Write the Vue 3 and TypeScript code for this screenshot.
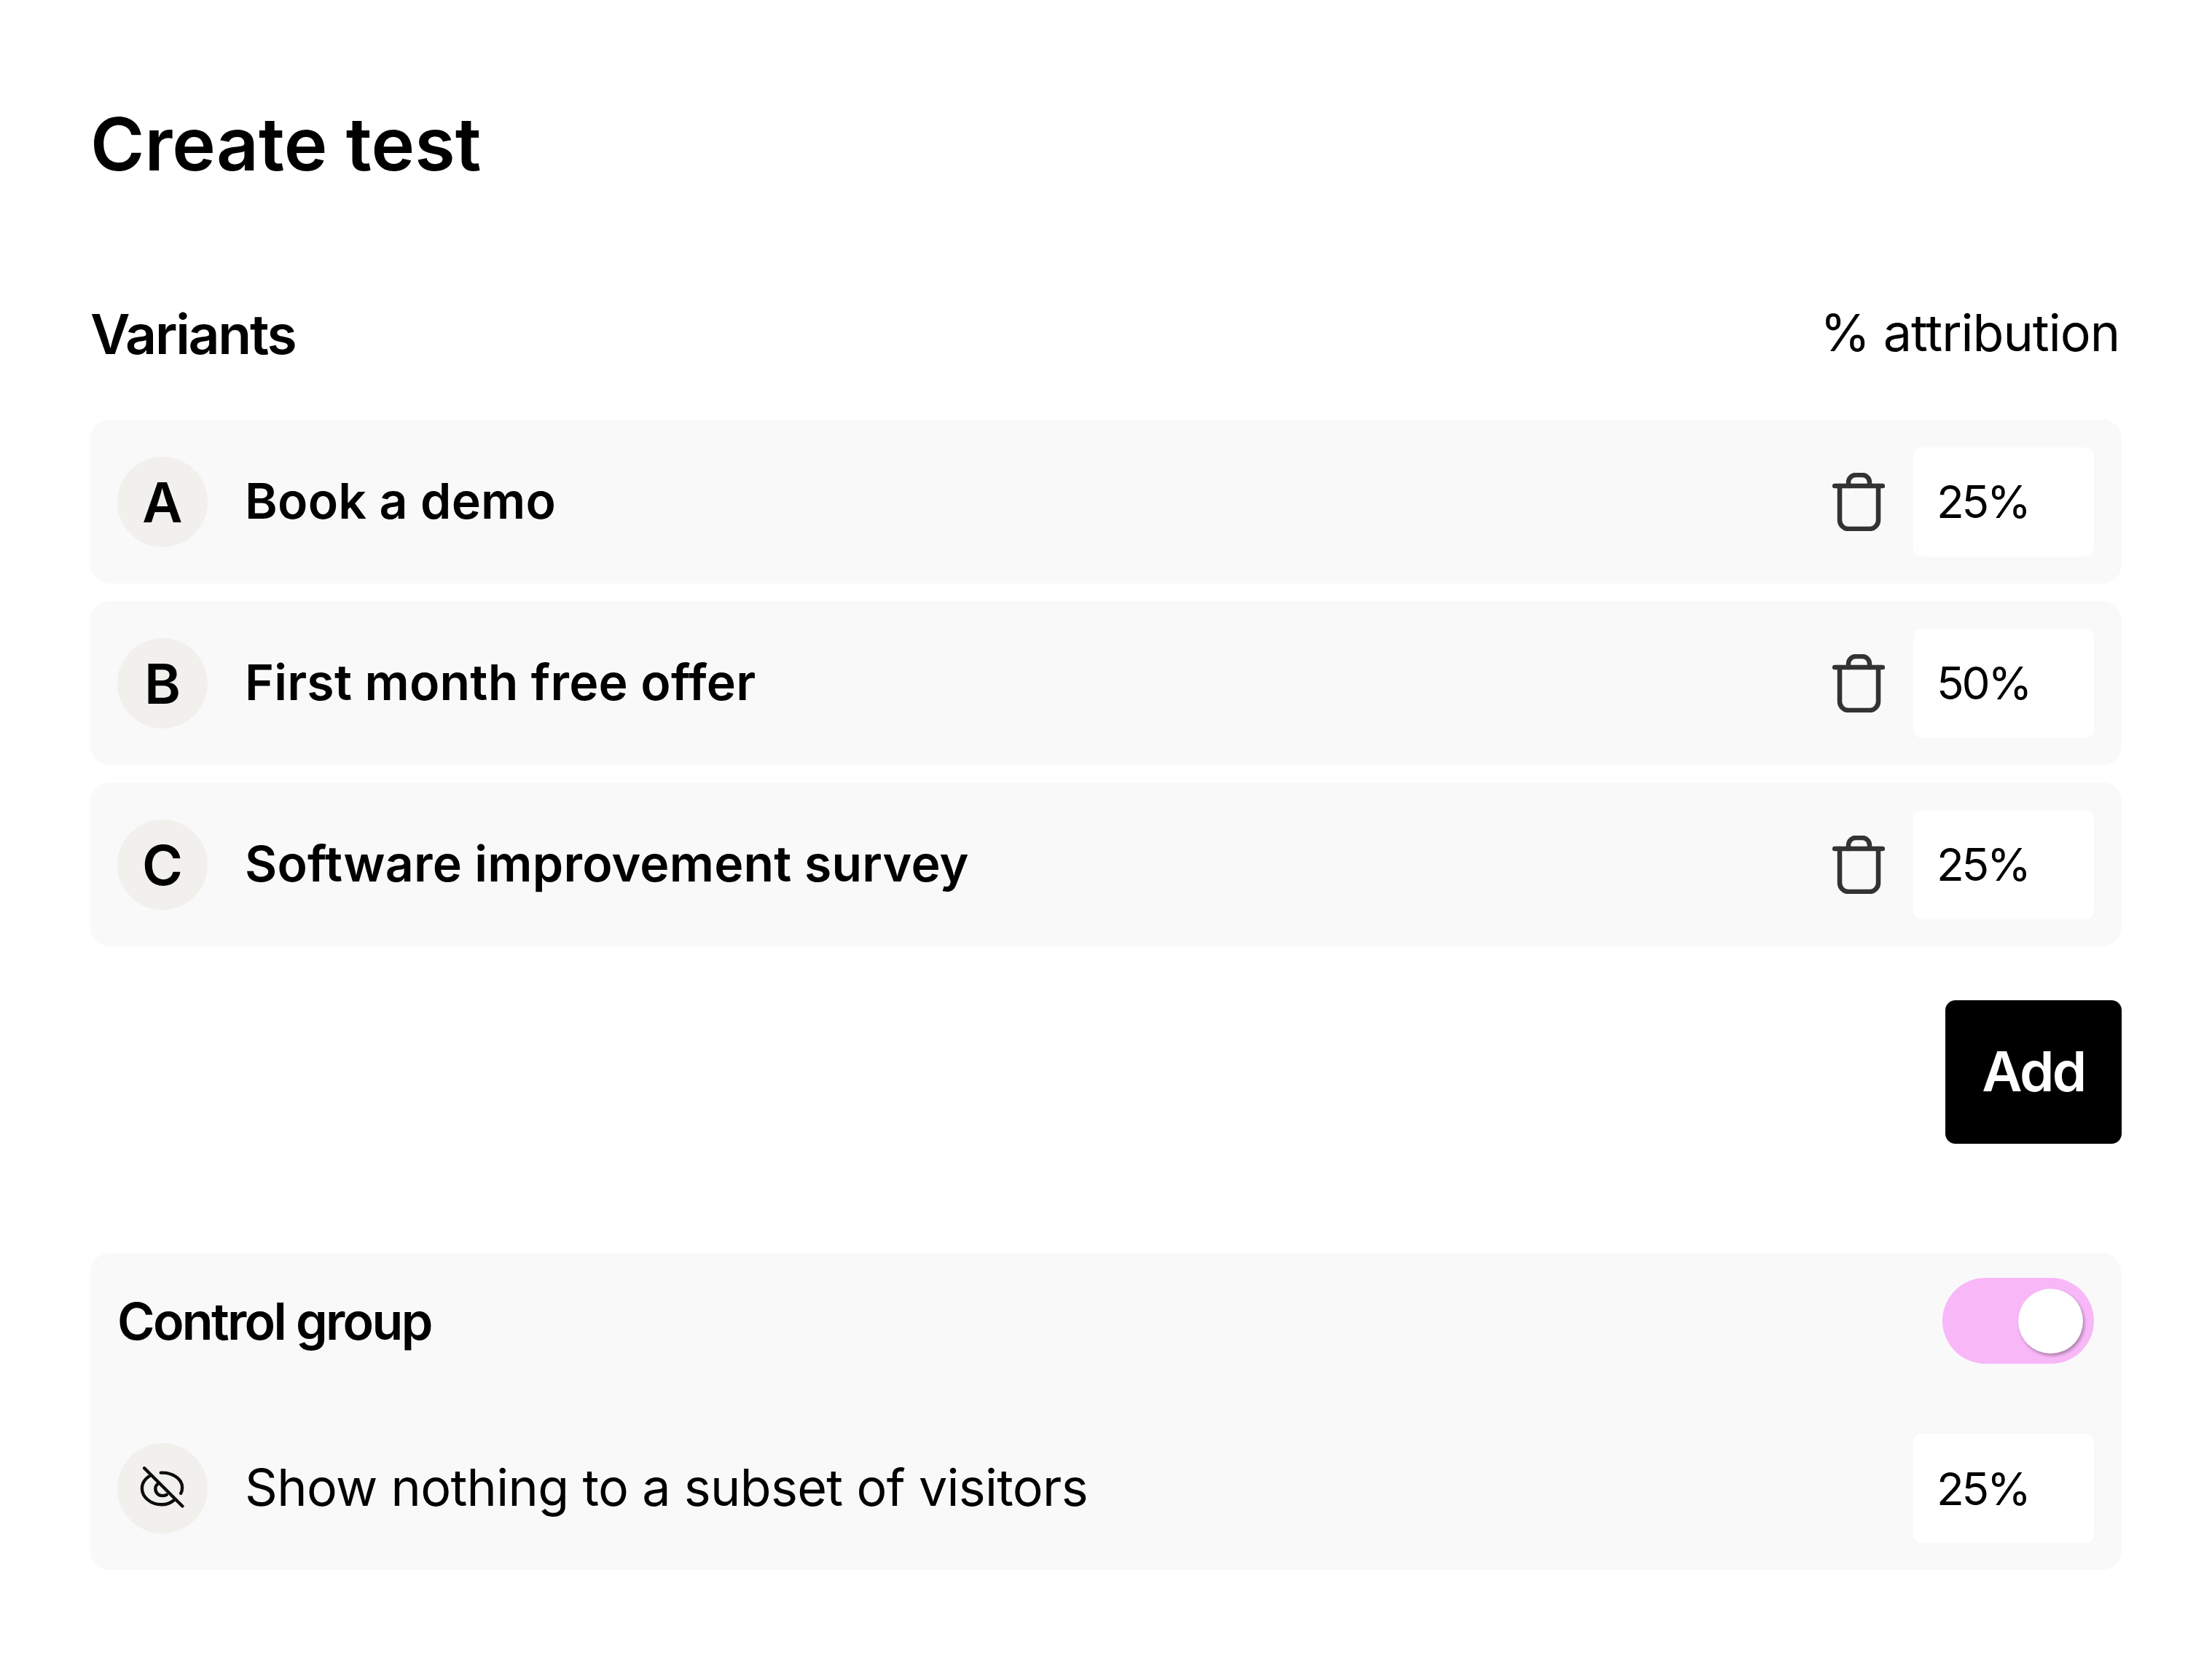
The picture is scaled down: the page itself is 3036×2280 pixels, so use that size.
<script setup lang="ts">
interface Variant { letter: string; name: string; pct: string }
const variants: Variant[] = [
  { letter: 'A', name: 'Book a demo', pct: '25%' },
  { letter: 'B', name: 'First month free offer', pct: '50%' },
  { letter: 'C', name: 'Software improvement survey', pct: '25%' },
]
</script>

<template>
  <main class="page">
    <h1 class="title">Create test</h1>

    <header class="head">
      <h2 class="section">Variants</h2>
      <span class="attr">% attribution</span>
    </header>

    <section class="rows">
      <div v-for="v in variants" :key="v.letter" class="card row">
        <div class="badge">{{ v.letter }}</div>
        <div class="name">{{ v.name }}</div>
        <svg class="trash" viewBox="0 0 72 80" fill="none" stroke="#333" stroke-width="6.5" stroke-linecap="round" stroke-linejoin="round">
          <path d="M3 18H69" />
          <path d="M10 18V65A12 12 0 0 0 22 77H51A12 12 0 0 0 63 65V18" />
          <path d="M22 18V13A10 10 0 0 1 32 3H41A10 10 0 0 1 51 13V18" />
        </svg>
        <div class="pct">{{ v.pct }}</div>
      </div>
    </section>

    <div class="actions">
      <button class="add" type="button">Add</button>
    </div>

    <section class="card control">
      <div class="control-head">
        <span class="control-title">Control group</span>
        <div class="toggle"><span class="knob"></span></div>
      </div>
      <div class="control-row">
        <div class="badge">
          <svg class="eye" viewBox="0 0 64 64" fill="none" stroke="#0c0c0c" stroke-width="4.5" stroke-linecap="round" stroke-linejoin="round">
            <path d="M6.3 3.3L60.3 57.3" />
            <path d="M29.7 10C45 9 60 18 60 31C60 34 59.5 36.5 58 39" />
            <path d="M13 15C7 19 3 25 3 32C3 45 16 55 31 55C37 55 43 53 48 49" />
            <path d="M25.3 25.7C23 27.5 22 30 22 32.5C22 38 26 42.5 31.5 42.5C34 42.5 36 42 38 41" />
          </svg>
        </div>
        <div class="desc">Show nothing to a subset of visitors</div>
        <div class="pct">25%</div>
      </div>
    </section>
  </main>
</template>

<style>
html, body { margin: 0; background: #fff; }
</style>

<style scoped>
.page {
  box-sizing: border-box;
  width: 3036px;
  height: 2280px;
  padding: 0 124px;
  font-family: Inter, "Liberation Sans", sans-serif;
  color: #000;
  display: flex;
  flex-direction: column;
  background: #fff;
}
.title {
  margin: 137px 0 0;
  height: 120px;
  line-height: 120px;
  font-size: 101px;
  font-weight: 600;
}
.head {
  margin-top: 161px;
  height: 80px;
  display: flex;
  justify-content: space-between;
  align-items: center;
}
.section {
  margin: 0;
  font-size: 75px;
  font-weight: 600;
  letter-spacing: -2.25px;
}
.attr {
  font-size: 70px;
  font-weight: 400;
  letter-spacing: -1px;
  margin: 0 3px 3px 0;
}
.rows {
  margin-top: 78px;
  display: flex;
  flex-direction: column;
  gap: 24px;
}
.card {
  background: #f9f9f9;
  border-radius: 26px;
}
.row {
  box-sizing: border-box;
  height: 225px;
  padding: 0 38px 0 37px;
  display: flex;
  align-items: center;
}
.badge {
  width: 124px;
  height: 124px;
  border-radius: 50%;
  background: #f1f0ed;
  display: flex;
  align-items: center;
  justify-content: center;
  font-size: 76px;
  font-weight: 600;
  flex: none;
}
.name {
  margin: 0 0 3px 51px;
  flex: 1;
  font-size: 68px;
  font-weight: 600;
  letter-spacing: 0.2px;
}
.trash {
  width: 72px;
  height: 80px;
  flex: none;
  margin-right: 39px;
}
.pct {
  box-sizing: border-box;
  width: 248px;
  height: 150px;
  background: #fff;
  border-radius: 12px;
  padding-left: 32px;
  display: flex;
  align-items: center;
  font-size: 62px;
  font-weight: 400;
  letter-spacing: -3.2px;
  flex: none;
}
.actions {
  margin-top: 74px;
  display: flex;
  justify-content: flex-end;
}
.add {
  width: 242px;
  height: 197px;
  border: 0;
  border-radius: 14px;
  background: #000;
  color: #fff;
  font-family: inherit;
  font-size: 76px;
  font-weight: 600;
  letter-spacing: -2.5px;
  padding: 0 0 3px;
}
.control {
  margin-top: 150px;
  height: 435px;
  box-sizing: border-box;
  padding: 34px 38px 37px 37px;
  display: flex;
  flex-direction: column;
  justify-content: space-between;
}
.control-head {
  display: flex;
  align-items: center;
  justify-content: space-between;
}
.control-title {
  font-size: 70px;
  font-weight: 600;
  letter-spacing: -2.7px;
}
.toggle {
  box-sizing: border-box;
  width: 208px;
  height: 118px;
  border-radius: 59px;
  background: #f8b8f8;
  padding: 15px;
  display: flex;
  justify-content: flex-end;
}
.knob {
  width: 89px;
  height: 89px;
  border-radius: 50%;
  background: #fff;
  box-shadow: 2px 3px 4px rgba(0, 0, 0, 0.3);
}
.control-row {
  display: flex;
  align-items: center;
  height: 150px;
}
.eye { width: 62px; height: 62px; }
.desc {
  margin: 0 0 3px 51px;
  flex: 1;
  font-size: 70px;
  font-weight: 400;
  letter-spacing: -0.7px;
}
</style>
